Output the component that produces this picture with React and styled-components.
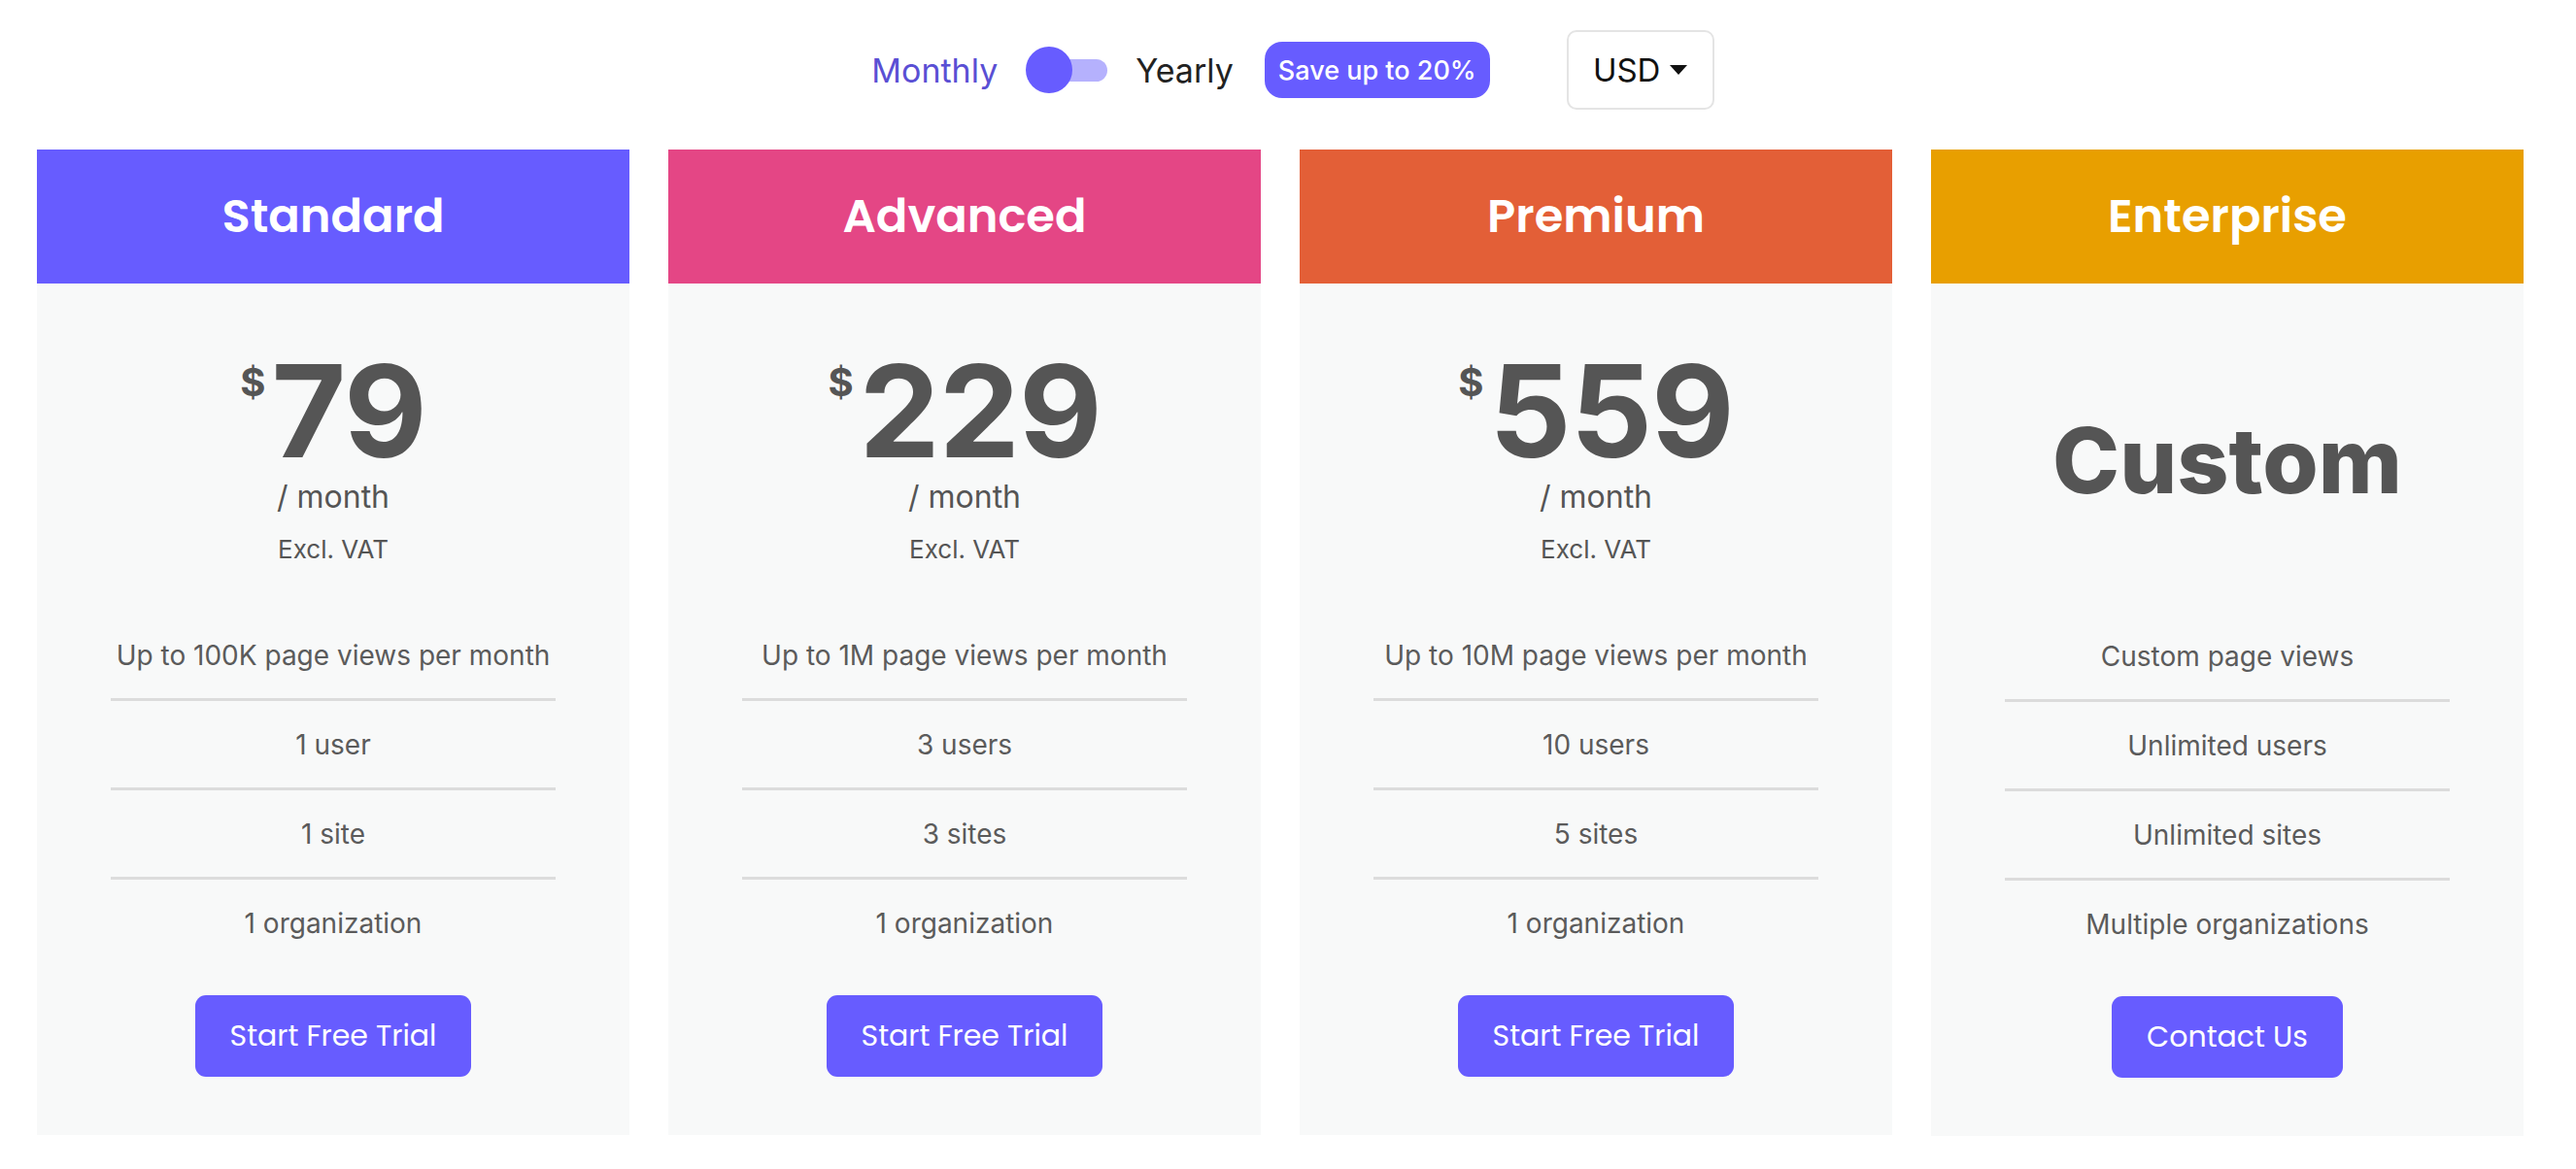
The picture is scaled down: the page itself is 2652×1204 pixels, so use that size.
import React from "react";
import styled, { createGlobalStyle } from "styled-components";

const GlobalStyle = createGlobalStyle`
  html, body { margin: 0; padding: 0; background: #ffffff; }
  body { font-family: Inter, "Liberation Sans", sans-serif; }
  * { box-sizing: border-box; }
`;

const Page = styled.div`
  width: 2652px;
  min-height: 1204px;
  padding-top: 31px;
`;

const TopBar = styled.div`
  display: flex;
  align-items: center;
  justify-content: center;
  height: 82px;
  padding-left: 10px;
`;

const PeriodLabel = styled.span`
  font-family: Inter, sans-serif;
  font-size: 34px;
  color: ${(p) => (p.$active ? "#5a4fd4" : "#222222")};
`;

const Switch = styled.div`
  position: relative;
  width: 84px;
  height: 48px;
  margin: 0 29px 0 29px;
  display: flex;
  align-items: center;
  justify-content: flex-end;
`;

const Track = styled.div`
  width: 72px;
  height: 23px;
  border-radius: 12px;
  background: #b5b1fd;
`;

const Knob = styled.div`
  position: absolute;
  left: 0;
  top: 0;
  width: 48px;
  height: 48px;
  border-radius: 50%;
  background: #675cff;
`;

const Badge = styled.span`
  margin-left: 32px;
  height: 58px;
  padding: 0 14px;
  display: inline-flex;
  align-items: center;
  border-radius: 18px;
  background: #675cff;
  color: #ffffff;
  font-family: Inter, sans-serif;
  font-size: 27px;
  font-weight: 500;
`;

const Currency = styled.button`
  margin-left: 79px;
  width: 152px;
  height: 82px;
  border: 2px solid #e4e4e4;
  border-radius: 10px;
  background: #ffffff;
  display: flex;
  align-items: center;
  justify-content: center;
  gap: 10px;
  font-family: Inter, sans-serif;
  font-size: 33px;
  color: #111111;
  padding: 0;
`;

const Cards = styled.div`
  display: grid;
  grid-template-columns: repeat(4, 610px);
  column-gap: 40px;
  padding-left: 38px;
  margin-top: 41px;
`;

const Card = styled.div`
  display: flex;
  flex-direction: column;
`;

const CardHeader = styled.div`
  height: 138px;
  background: ${(p) => p.$color};
  display: flex;
  align-items: center;
  justify-content: center;
`;

const Title = styled.h2`
  margin: 0;
  font-family: Poppins, "Open Sans", sans-serif;
  font-weight: 600;
  font-size: 48px;
  color: #ffffff;
`;

const Body = styled.div`
  background: #f8f9f9;
  padding: 65px 0 60px;
  display: flex;
  flex-direction: column;
  align-items: center;
`;

const PriceBlock = styled.div`
  height: 225px;
  display: flex;
  flex-direction: column;
  align-items: center;
`;

const PriceRow = styled.div`
  display: flex;
  align-items: flex-start;
  color: #555555;
  font-family: Inter, sans-serif;
  font-weight: 700;
`;

const Dollar = styled.span`
  font-size: 40px;
  line-height: 1;
  margin-top: 17px;
  margin-right: 6px;
`;

const Amount = styled.span`
  font-size: 132px;
  line-height: 1;
  letter-spacing: -1px;
`;

const Per = styled.div`
  margin-top: 3px;
  font-size: 32px;
  color: #555555;
`;

const Vat = styled.div`
  margin-top: 19px;
  font-size: 26px;
  color: #555555;
`;

const CustomBlock = styled.div`
  height: 226px;
  padding-top: 8px;
  display: flex;
  align-items: center;
  justify-content: center;
  font-family: Inter, sans-serif;
  font-weight: 800;
  font-size: 93px;
  color: #555555;
`;

const Features = styled.ul`
  list-style: none;
  margin: 48px 0 0;
  padding: 0;
  width: 75%;
`;

const Feature = styled.li`
  height: 89px;
  display: flex;
  align-items: center;
  justify-content: center;
  font-size: 28px;
  color: #5b5b5b;
  box-sizing: content-box;
  border-bottom: 3px solid #dcdcdc;
  &:last-child {
    border-bottom: none;
  }
`;

const CTA = styled.button`
  margin-top: 30px;
  height: 84px;
  padding: 0 36px;
  border: none;
  border-radius: 11px;
  background: #675cff;
  color: #ffffff;
  font-family: Poppins, "Open Sans", sans-serif;
  font-weight: 400;
  font-size: 30px;
  cursor: pointer;
`;

const plans = [
  {
    name: "Standard",
    color: "#675cff",
    price: "79",
    features: ["Up to 100K page views per month", "1 user", "1 site", "1 organization"],
    cta: "Start Free Trial",
  },
  {
    name: "Advanced",
    color: "#e44685",
    price: "229",
    features: ["Up to 1M page views per month", "3 users", "3 sites", "1 organization"],
    cta: "Start Free Trial",
  },
  {
    name: "Premium",
    color: "#e35f37",
    price: "559",
    features: ["Up to 10M page views per month", "10 users", "5 sites", "1 organization"],
    cta: "Start Free Trial",
  },
  {
    name: "Enterprise",
    color: "#e89f00",
    price: null,
    features: ["Custom page views", "Unlimited users", "Unlimited sites", "Multiple organizations"],
    cta: "Contact Us",
  },
];

function Caret() {
  return (
    <svg width="18" height="10" viewBox="0 0 18 10" aria-hidden="true">
      <path d="M0 0 H18 L9 10 Z" fill="#111111" />
    </svg>
  );
}

export default function App() {
  return (
    <>
      <GlobalStyle />
      <Page>
        <TopBar>
          <PeriodLabel $active>Monthly</PeriodLabel>
          <Switch>
            <Track />
            <Knob />
          </Switch>
          <PeriodLabel>Yearly</PeriodLabel>
          <Badge>Save up to 20%</Badge>
          <Currency>
            USD <Caret />
          </Currency>
        </TopBar>
        <Cards>
          {plans.map((p) => (
            <Card key={p.name}>
              <CardHeader $color={p.color}>
                <Title>{p.name}</Title>
              </CardHeader>
              <Body>
                {p.price ? (
                  <PriceBlock>
                    <PriceRow>
                      <Dollar>$</Dollar>
                      <Amount>{p.price}</Amount>
                    </PriceRow>
                    <Per>/ month</Per>
                    <Vat>Excl. VAT</Vat>
                  </PriceBlock>
                ) : (
                  <CustomBlock>Custom</CustomBlock>
                )}
                <Features>
                  {p.features.map((f) => (
                    <Feature key={f}>{f}</Feature>
                  ))}
                </Features>
                <CTA>{p.cta}</CTA>
              </Body>
            </Card>
          ))}
        </Cards>
      </Page>
    </>
  );
}
